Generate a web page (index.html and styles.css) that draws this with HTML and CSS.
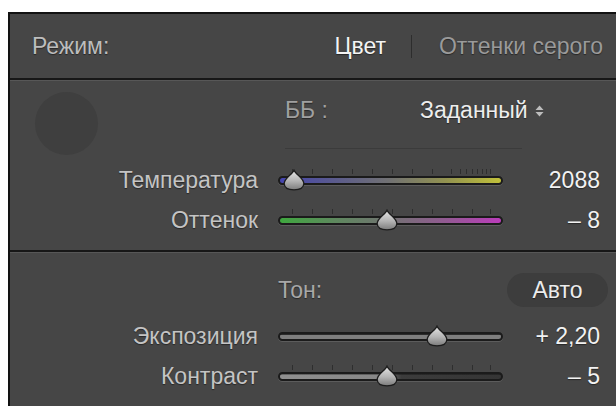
FILE: index.html
```html
<!DOCTYPE html>
<html lang="ru">
<head>
<meta charset="utf-8">
<title>Баланс белого</title>
<link rel="stylesheet" href="styles.css">
</head>
<body>
<div class="panel">
  <header class="mode">
    <span class="mode-label">Режим:</span>
    <nav class="mode-switch">
      <span class="mode-opt is-active">Цвет</span>
      <span class="mode-sep"></span>
      <span class="mode-opt">Оттенки серого</span>
    </nav>
  </header>

  <section class="group">
    <div class="wb-head">
      <div class="picker"></div>
      <div class="wb-block">
        <div class="wb-row">
          <span class="wb-label">ББ :</span>
          <span class="wb-value">Заданный
            <svg class="updown" width="9" height="12" viewBox="0 0 9 12"><path d="M4.5 0.5 L8.5 5 H0.5 Z M0.5 7 H8.5 L4.5 11.5 Z" fill="#bdbdbd"/></svg>
          </span>
        </div>
        <div class="wb-line"></div>
      </div>
    </div>

    <div class="row">
      <span class="label">Температура</span>
      <div class="slider">
        <span class="tick" style="left:6.2%"></span><span class="tick" style="left:15.1%"></span><span class="tick" style="left:24%"></span><span class="tick" style="left:32.9%"></span><span class="tick" style="left:41.8%"></span><span class="tick" style="left:50.7%"></span><span class="tick" style="left:59.6%"></span><span class="tick" style="left:68.4%"></span><span class="tick" style="left:76.9%"></span><span class="tick" style="left:80.9%"></span><span class="tick" style="left:83.6%"></span><span class="tick" style="left:86.2%"></span><span class="tick" style="left:88.4%"></span><span class="tick" style="left:90.7%"></span><span class="tick" style="left:92.4%"></span><span class="tick" style="left:94.2%"></span>
        <div class="track track-temp"></div>
        <svg class="thumb" style="left:7.1%" width="22" height="22" viewBox="0 0 22 22"><use href="#knob"/></svg>
      </div>
      <span class="value">2088</span>
    </div>

    <div class="row">
      <span class="label">Оттенок</span>
      <div class="slider">
        <span class="tick" style="left:6.2%"></span><span class="tick" style="left:15.1%"></span><span class="tick" style="left:24%"></span><span class="tick" style="left:32.9%"></span><span class="tick" style="left:41.8%"></span><span class="tick" style="left:50.7%"></span><span class="tick" style="left:59.6%"></span><span class="tick" style="left:68.4%"></span><span class="tick" style="left:77.3%"></span><span class="tick" style="left:86.2%"></span><span class="tick" style="left:94.2%"></span>
        <div class="track track-tint"></div>
        <svg class="thumb" style="left:48.4%" width="22" height="22" viewBox="0 0 22 22"><use href="#knob"/></svg>
      </div>
      <span class="value">– 8</span>
    </div>
  </section>

  <section class="group">
    <div class="tone-head">
      <span class="tone-label">Тон:</span>
      <button class="auto">Авто</button>
    </div>

    <div class="row">
      <span class="label">Экспозиция</span>
      <div class="slider">
        <div class="track track-exp"></div>
        <svg class="thumb" style="left:70.7%" width="22" height="22" viewBox="0 0 22 22"><use href="#knob"/></svg>
      </div>
      <span class="value">+ 2,20</span>
    </div>

    <div class="row">
      <span class="label">Контраст</span>
      <div class="slider">
        <span class="tick" style="left:6.2%"></span><span class="tick" style="left:15.1%"></span><span class="tick" style="left:24%"></span><span class="tick" style="left:32.9%"></span><span class="tick" style="left:41.8%"></span><span class="tick" style="left:50.7%"></span><span class="tick" style="left:59.6%"></span><span class="tick" style="left:68.4%"></span><span class="tick" style="left:77.3%"></span><span class="tick" style="left:86.2%"></span><span class="tick" style="left:94.2%"></span>
        <div class="track track-con"></div>
        <svg class="thumb" style="left:48.4%" width="22" height="22" viewBox="0 0 22 22"><use href="#knob"/></svg>
      </div>
      <span class="value">– 5</span>
    </div>
  </section>
</div>

<svg class="defs" width="0" height="0">
  <defs>
    <linearGradient id="knobFill" x1="0" y1="0" x2="0" y2="1">
      <stop offset="0" stop-color="#e6e6e6"/>
      <stop offset="0.55" stop-color="#b4b4b4"/>
      <stop offset="1" stop-color="#7c7c7c"/>
    </linearGradient>
    <path id="knob" d="M11 1.2 C12.6 5.4 20.8 9 20.8 14.6 C20.8 19 16.8 20.8 11 20.8 C5.2 20.8 1.2 19 1.2 14.6 C1.2 9 9.4 5.4 11 1.2 Z" fill="url(#knobFill)" stroke="#1d1d1d" stroke-width="1.3"/>
  </defs>
</svg>
</body>
</html>
```

FILE: styles.css
```css
* { box-sizing: border-box; }

html, body { height: 100%; }

body {
  margin: 0;
  padding: 12px 0 0 8px;
  background: #ffffff;
  overflow: hidden;
  font-family: "Liberation Sans", Arial, sans-serif;
  font-size: 23px;
}

.panel {
  height: 100%;
  background: #464646;
  border-top: 2px solid #121212;
  border-left: 2px solid #121212;
  color: #c4c4c4;
  text-shadow: 0 1px 1px rgba(0, 0, 0, 0.45);
}

/* mode switch header */
.mode {
  height: 66px;
  display: flex;
  align-items: center;
  justify-content: space-between;
  padding: 0 13px 0 22px;
  border-bottom: 2px solid #171717;
  box-shadow: 0 1px 0 #575757;
}

.mode-label { color: #bdbdbd; }

.mode-switch {
  display: flex;
  align-items: center;
  gap: 25px;
}

.mode-opt { color: #9a9a9a; }
.mode-opt.is-active { color: #f4f4f4; }

.mode-sep {
  width: 1px;
  height: 23px;
  background: #2d2d2d;
  margin-right: 2px;
}

/* groups */
.group {
  padding: 12px 16px 10px 0;
  border-bottom: 2px solid #171717;
  box-shadow: 0 1px 0 #575757;
  margin-bottom: 1px;
}

.group + .group { padding-top: 20px; }

.wb-head {
  display: grid;
  grid-template-columns: 248px 1fr;
  column-gap: 20px;
  height: 68px;
}

.picker {
  width: 63px;
  height: 63px;
  margin-left: 25px;
  border-radius: 50%;
  background: #3f3f3f;
}

.wb-block {
  padding: 5px 0 0 7px;
}

.wb-row {
  display: flex;
  align-items: center;
  height: 26px;
}

.wb-label {
  width: 135px;
  color: #a0a0a0;
}

.wb-value {
  display: flex;
  align-items: center;
  gap: 7px;
  color: #ededed;
}

.updown { margin-top: 1px; }

.wb-line {
  width: 237px;
  height: 1px;
  margin-top: 25px;
  background: #3b3b3b;
}

/* slider rows */
.row {
  display: grid;
  grid-template-columns: 248px 225px 1fr;
  column-gap: 20px;
  align-items: center;
  height: 40px;
}

.label { text-align: right; }

.value {
  text-align: right;
  color: #f2f2f2;
}

.slider {
  position: relative;
  height: 40px;
  display: flex;
  align-items: center;
}

.track {
  width: 100%;
  height: 9px;
  border-radius: 5px;
  border: 2px solid #1b1b1b;
  box-shadow: 0 1px 0 #5c5c5c;
}

.track-temp { background: linear-gradient(90deg, #4545b0 0%, #5b5b8c 25%, #727272 50%, #929250 75%, #c0c03a 100%); }
.track-tint { background: linear-gradient(90deg, #3fa83f 0%, #5e885e 25%, #727272 50%, #925a92 75%, #bb3cbb 100%); }
.track-exp  { background: linear-gradient(180deg, #2c2c2c 0 30%, #7e7e7e 30% 100%); }
.track-con  { background: linear-gradient(180deg, rgba(0,0,0,0.3) 0 30%, rgba(0,0,0,0) 30%), linear-gradient(90deg, #909090 0%, #878787 45%, #3c3c3c 55%, #353535 100%); }

.tick {
  position: absolute;
  top: 9px;
  width: 1px;
  height: 5px;
  background: #2e2e2e;
}

.thumb {
  position: absolute;
  top: 9px;
  margin-left: -11px;
}

/* tone header */
.tone-head {
  display: grid;
  grid-template-columns: 248px 1fr auto;
  column-gap: 20px;
  align-items: center;
  height: 34px;
  margin-right: -8px;
  margin-bottom: 9px;
}

.tone-label {
  grid-column: 2;
  color: #a8a8a8;
}

.auto {
  width: 101px;
  height: 34px;
  border: 0;
  border-radius: 17px;
  background: #3d3d3d;
  color: #ececec;
  font: inherit;
  text-shadow: inherit;
  padding: 0;
}

.defs { position: absolute; }
```
